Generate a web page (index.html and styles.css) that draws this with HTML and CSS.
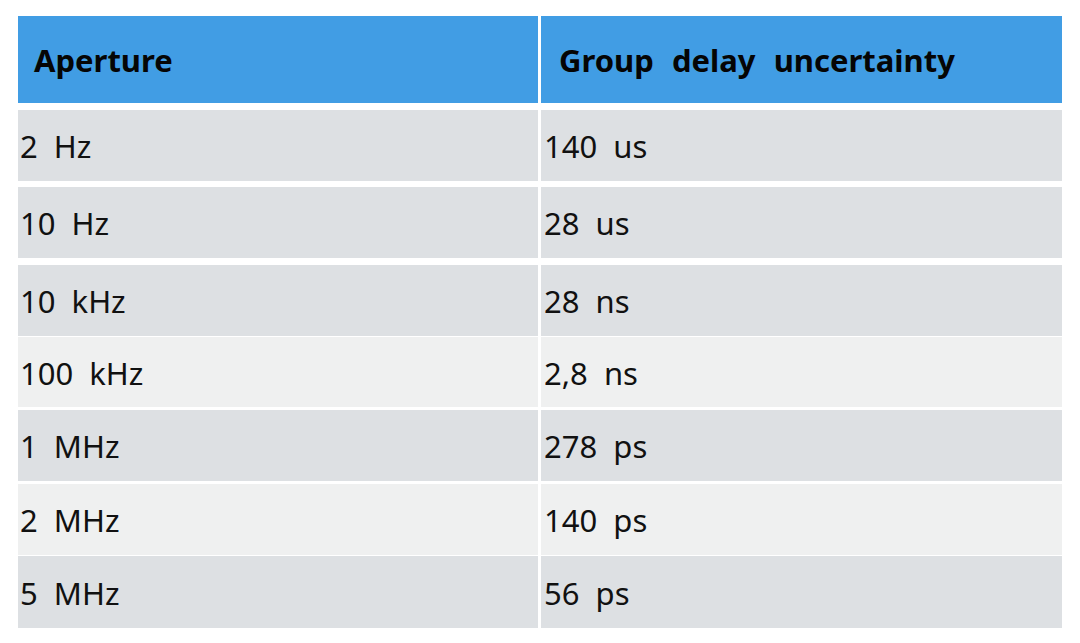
FILE: index.html
```html
<!DOCTYPE html>
<html>
<head>
<meta charset="utf-8">
<link rel="stylesheet" href="styles.css">
</head>
<body>
<div class="table">
  <div class="row head">
    <div class="cell">Aperture</div>
    <div class="cell">Group  delay  uncertainty</div>
  </div>
  <div class="row dark g7">
    <div class="cell">2  Hz</div>
    <div class="cell">140  us</div>
  </div>
  <div class="row dark g6">
    <div class="cell">10  Hz</div>
    <div class="cell">28  us</div>
  </div>
  <div class="row dark g7">
    <div class="cell">10  kHz</div>
    <div class="cell">28  ns</div>
  </div>
  <div class="row light g1 short">
    <div class="cell">100  kHz</div>
    <div class="cell">2,8  ns</div>
  </div>
  <div class="row dark g3">
    <div class="cell">1  MHz</div>
    <div class="cell">278  ps</div>
  </div>
  <div class="row light g3">
    <div class="cell">2  MHz</div>
    <div class="cell">140  ps</div>
  </div>
  <div class="row dark g1 tall">
    <div class="cell">5  MHz</div>
    <div class="cell">56  ps</div>
  </div>
</div>
</body>
</html>
```

FILE: styles.css
```css
html, body {
  margin: 0;
  padding: 0;
  background: #ffffff;
}
body {
  font-family: "Noto Sans", "Open Sans", sans-serif;
  color: #111111;
}
.table {
  margin: 16px 0 0 18px;
  width: 1044px;
  display: flex;
  flex-direction: column;
}
.row {
  display: grid;
  grid-template-columns: 520px 521px;
  column-gap: 3px;
  height: 71px;
  background: #ffffff;
}
.cell {
  display: flex;
  align-items: center;
  white-space: pre;
  font-size: 31px;
  padding-left: 2px;
  padding-top: 1px;
}
.cell + .cell {
  padding-left: 3px;
}
.head {
  height: 87px;
}
.head .cell {
  background: #419de4;
  font-weight: 700;
  color: #050505;
  padding-left: 16px;
  word-spacing: 1px;
}
.head .cell + .cell {
  padding-left: 18px;
}
.dark .cell {
  background: #dde0e3;
}
.light .cell {
  background: #eff0f0;
}
.g1 { margin-top: 1px; }
.g3 { margin-top: 3px; }
.g6 { margin-top: 6px; }
.g7 { margin-top: 7px; }
.short { height: 70px; }
.tall { height: 72px; }
```
